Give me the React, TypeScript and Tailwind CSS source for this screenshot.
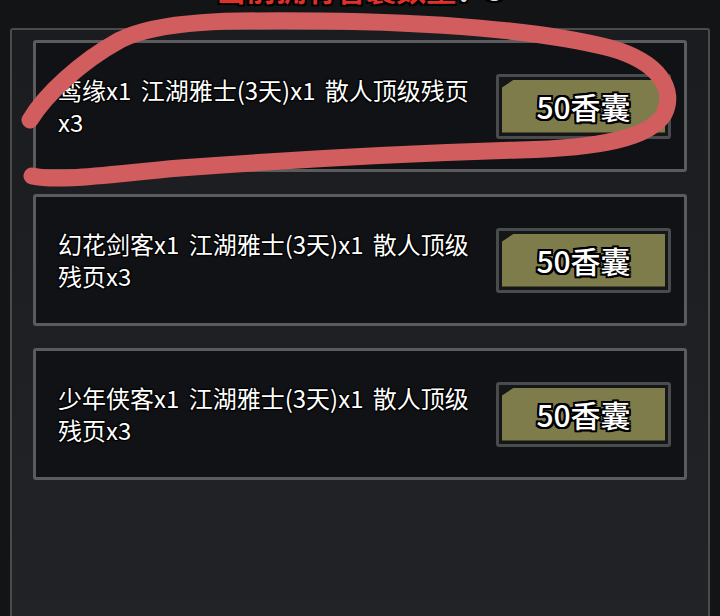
import React from "react";

const items = [
  "鸾缘x1 江湖雅士(3天)x1 散人顶级残页x3",
  "幻花剑客x1 江湖雅士(3天)x1 散人顶级残页x3",
  "少年侠客x1 江湖雅士(3天)x1 散人顶级残页x3",
];

function Card({ text }: { text: string }) {
  return (
    <div className="h-[132px] shrink-0 flex items-center justify-between border-[3px] border-[#5a5b5d] rounded-[3px] bg-[#111215] pl-[22px] pr-[13px]">
      <div className="w-[432px] text-[24px] leading-[32px] text-white [word-spacing:4px] [text-shadow:-1px_-1px_0_#000,1px_-1px_0_#000,-1px_1px_0_#000,1px_1px_0_#000,0_0_3px_#000]">
        {text}
      </div>
      <div className="w-[175px] h-[65px] shrink-0 border-[3px] border-[#4a4b4d] rounded-[3px] bg-[#151618] p-[3px]">
        <div className="w-full h-full bg-[#7f7c4c] flex items-center justify-center [clip-path:polygon(12px_0,100%_0,100%_100%,0_100%,0_8px)]">
          <span className="text-[30px] leading-none font-medium text-white [text-shadow:-2px_-2px_0_#000,2px_-2px_0_#000,-2px_2px_0_#000,2px_2px_0_#000,0_-2px_0_#000,0_2px_0_#000,-2px_0_0_#000,2px_0_0_#000]">
            50香囊
          </span>
        </div>
      </div>
    </div>
  );
}

export default function App() {
  return (
    <div
      className="relative w-[720px] h-[616px] overflow-hidden bg-[#131416] flex flex-col"
      style={{ fontFamily: '"Noto Sans CJK SC", "Noto Sans", sans-serif' }}
    >
      <div className="h-[28px] shrink-0 relative overflow-hidden">
        <div className="absolute left-0 right-0 -top-[29px] text-center text-[30px] leading-[34px] font-bold [text-shadow:-2px_-2px_0_#000,2px_-2px_0_#000,-2px_2px_0_#000,2px_2px_0_#000]">
          <span className="text-[#e0302a]">当前拥有香囊数量</span>
          <span className="text-[#ddd]">：5</span>
        </div>
      </div>
      <div className="flex-1 mx-[10px] border-2 border-b-0 border-[#4a4b4d] rounded-t-[3px] bg-gradient-to-b from-[#1b1c1f] to-[#222326] pt-[10px] px-[21px] flex flex-col gap-[22px]">
        {items.map((t, i) => (
          <Card key={i} text={t} />
        ))}
      </div>
      <svg
        className="absolute inset-0 pointer-events-none"
        width="720"
        height="616"
        viewBox="0 0 720 616"
      >
        <path
          d="M 30 120 C 45 95, 80 62, 120 40 C 160 20, 230 20, 320 21 C 430 22, 540 30, 610 48 C 660 62, 676 90, 664 114 C 650 138, 600 148, 520 150 C 420 153, 300 159, 180 168 C 110 174, 60 182, 32 176"
          fill="none"
          stroke="#d15d5f"
          strokeWidth="17"
          strokeLinecap="round"
          strokeLinejoin="round"
        />
      </svg>
    </div>
  );
}
